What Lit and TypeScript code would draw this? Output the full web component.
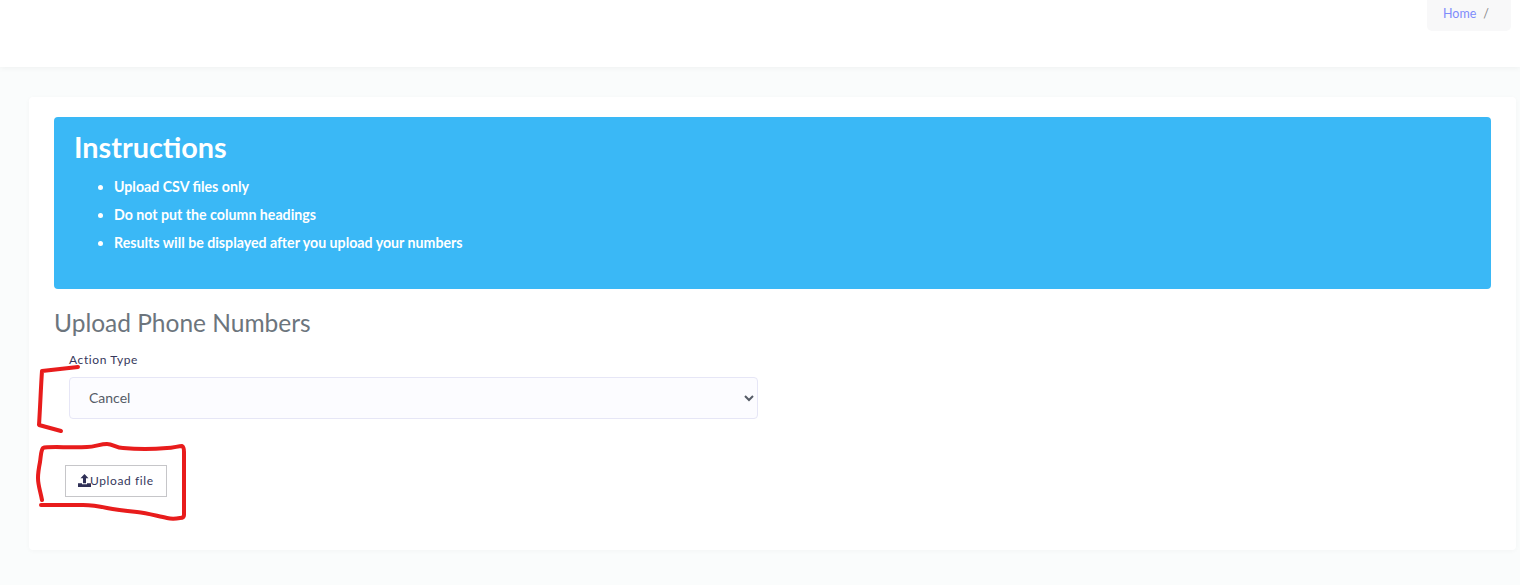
import { LitElement, html, css } from "lit";
import { customElement } from "lit/decorators.js";

@customElement("app-root")
export class AppRoot extends LitElement {
  static styles = css`
    :host { display: block; height: 585px; overflow: hidden; position: relative; background: #fafcfc; font-family: "Lato", "Noto Sans", sans-serif; color: #3f4254; }
    .header { height: 67px; background: #fff; box-shadow: 0 1px 6px rgba(0,0,0,.05); display: flex; justify-content: flex-end; align-items: flex-start; padding-right: 9px; box-sizing: border-box; }
    .crumb { width: 84px; height: 31px; box-sizing: border-box; background: #f8f8f9; border-radius: 0 0 5px 5px; padding: 5px 0 0 16px; font-size: 12.5px; line-height: 17px; color: #8a8a8a; display: flex; gap: 7px; }
    .crumb a { color: #7f8cfb; text-decoration: none; }
    .main { padding: 30px 4px 0 29px; }
    .card { background: #fff; height: 453px; box-sizing: border-box; padding: 20px 25px; border-radius: 4px; box-shadow: 0 1px 5px rgba(0,0,0,.03); }
    .alert { background: #3ab8f6; color: #fff; height: 172px; box-sizing: border-box; border-radius: 4px; padding: 12px 20px; }
    .alert h2 { margin: 0; font-size: 28.8px; line-height: 36px; font-weight: 700; }
    .alert ul { margin: 8px 0 0; padding: 0 0 0 40px; font-size: 14.2px; line-height: 28px; font-weight: 700; }
    .title { margin: 19px 0 0; font-size: 24.5px; line-height: 30px; font-weight: 400; color: #6c757d; }
    .field { width: 689px; margin: 14px 0 0 15px; }
    label { display: block; font-size: 12px; line-height: 16px; letter-spacing: .6px; font-weight: 400; color: #36375c; margin-bottom: 9px; }
    select { display: block; width: 100%; height: 42px; box-sizing: border-box; background-color: #fcfcff; border: 1px solid #e6e6f6; border-radius: 4px; padding: 0 15px 2px; font: 14px "Lato", "Noto Sans", sans-serif; color: #555b66; outline: none; }
    .btn { display: inline-flex; align-items: center; height: 32px; width: 102px; box-sizing: border-box; margin: 46px 0 0 11px; padding: 0 0 2px 12px; background: #fff; border: 1px solid #c6c6c9; font-size: 12px; letter-spacing: .6px; color: #36375c; }
    .btn svg { width: 13px; height: 13px; flex: none; fill: #2f3057; margin: 0 -1px 0 0; }
    .ink { position: absolute; left: 0; top: 0; width: 1520px; height: 585px; pointer-events: none; fill: none; stroke: #e81c1c; stroke-width: 4; stroke-linecap: round; stroke-linejoin: round; }
  `;

  render() {
    return html`
      <div class="header">
        <div class="crumb"><a href="#">Home</a><span>/</span></div>
      </div>
      <div class="main">
        <div class="card">
          <div class="alert">
            <h2>Instructions</h2>
            <ul>
              <li>Upload CSV files only</li>
              <li>Do not put the column headings</li>
              <li>Results will be displayed after you upload your numbers</li>
            </ul>
          </div>
          <h3 class="title">Upload Phone Numbers</h3>
          <div class="field">
            <label>Action Type</label>
            <select><option>Cancel</option></select>
          </div>
          <div class="btn">
            <svg viewBox="0 0 13 13"><path d="M6.5 0 10.5 4.3H8V9.2H5V4.3H2.5Z"/><path d="M0 9.2H4V10.2H9V9.2H13V13H0Z"/></svg>Upload file
          </div>
        </div>
      </div>
      <svg class="ink" viewBox="0 0 1520 585">
        <path d="M78 367L60 369L42 371C41 385 40 410 39 425L61 431"/>
        <path d="M42 500C40 490 38 485 38 478C38 472 39 467 40 462C41 455 41 450 43 448C47 446 70 448 87 447C95 447 100 444 107 444C113 444 116 448 123 448C135 449 155 449 167 448C173 448 178 446 182 446C184 447 184 449 184 452L184 515C184 517 183 518 180 518C175 519 171 519 167 518C157 516 147 513 137 512C127 511 117 510 107 508C98 506 90 505 83 505L41 505"/>
      </svg>
    `;
  }
}
